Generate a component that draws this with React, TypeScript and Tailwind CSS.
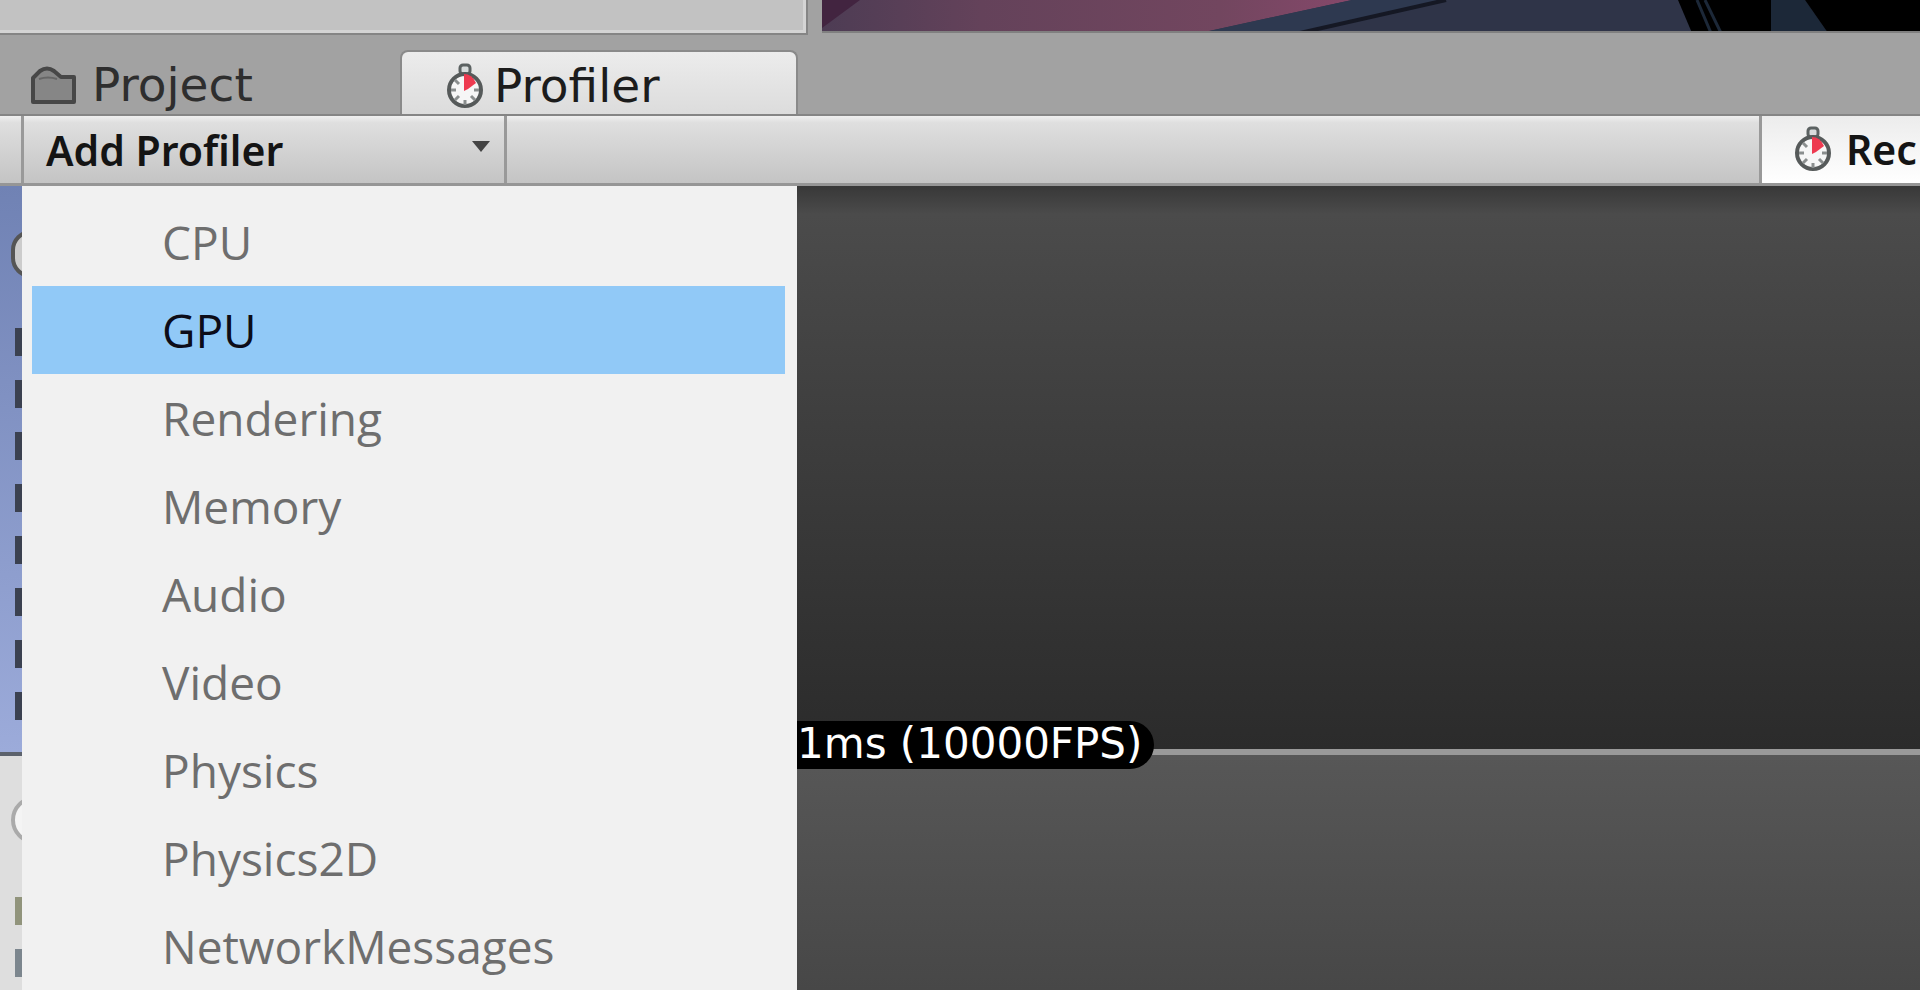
const rows = ['CPU', 'GPU', 'Rendering', 'Memory', 'Audio', 'Video', 'Physics', 'Physics2D', 'NetworkMessages'];

const StopwatchIcon = () => (
  <svg viewBox="0 0 38 46" className="w-[38px] h-[46px] shrink-0" aria-hidden="true">
    <rect x="14" y="2" width="10" height="9" rx="3" fill="#d8dcdc" stroke="#5c6262" strokeWidth="3" />
    <circle cx="19" cy="27" r="16" fill="#f6f6f6" stroke="#565a5a" strokeWidth="4" />
    <path d="M18 28V11q8 0 12 9l-8 6z" fill="#ee3a50" />
    <path
      d="M19 37v5M5 27h5M28 27h5M9 37l4-4M29 37l-4-4M9 17l4 4"
      stroke="#8a8e8e"
      strokeWidth="3"
    />
  </svg>
);

const FolderIcon = () => (
  <svg viewBox="0 0 48 40" className="w-12 h-10 shrink-0" aria-hidden="true">
    <path d="M3 37V13l7-7q7-5 14 0l7 6h13v25z" fill="#868686" stroke="#474747" strokeWidth="4" strokeLinejoin="round" />
    <path d="M9 14q9-3 18 0" fill="none" stroke="#666" strokeWidth="2" />
  </svg>
);

const Scene = () => (
  <svg viewBox="0 0 1098 33" preserveAspectRatio="none" className="h-[33px] flex-1 min-w-0" aria-hidden="true">
    <defs>
      <linearGradient id="dusk">
        <stop offset="0" stopColor="#4d3c54" />
        <stop offset="0.3" stopColor="#64425a" />
        <stop offset="0.75" stopColor="#72465f" />
        <stop offset="1" stopColor="#85486a" />
      </linearGradient>
    </defs>
    <path d="M0 0h1098v33H0z" fill="#2f3448" />
    <path d="M0 0h530L378 33H0z" fill="url(#dusk)" />
    <path d="M0 0h38L0 28z" fill="#422440" />
    <path d="M530 0h90L478 33H378z" fill="#2e3950" />
    <path d="M624 0L478 33" stroke="#151824" strokeWidth="4" />
    <path d="M856 0h93v33h-79z" fill="#000" />
    <path d="M875 0l14 33M883 0l16 33" stroke="#1c2838" strokeWidth="3" />
    <path d="M949 0h34l23 33h-57z" fill="#1c2838" />
    <path d="M983 0h115v33h-92z" fill="#000" />
    <path d="M0 32h1098" stroke="#808080" strokeWidth="2" />
  </svg>
);

const chartNames = ['Rendering', 'Scripts', 'Physics', 'Animation', 'GarbageCollector', 'VSync', 'UI', 'Others'];

const App = () => {
  return (
    <div className="flex flex-col min-h-screen overflow-hidden bg-[#a2a2a2] text-[#1c1c1c] font-['DejaVu_Sans',sans-serif]">
      {/* Panels above the dock */}
      <div className="flex h-[35px] shrink-0">
        <div className="w-[808px] h-[35px] shrink-0 bg-[#c2c2c2] border-b-2 border-r-2 border-[#858585] shadow-[inset_-3px_-3px_0_#d4d4d4]" />
        <div className="flex flex-1 min-w-0 pl-3.5">
          <Scene />
        </div>
      </div>

      {/* Tabs */}
      <div role="tablist" className="flex h-[81px] shrink-0 items-end border-b-2 border-[#858585]">
        <button
          role="tab"
          aria-selected={false}
          className="flex items-center gap-3.5 w-[400px] h-16 pt-1.5 pl-[30px] text-[47px] leading-[58px] text-[#2e2e2e]"
        >
          <FolderIcon />
          Project
        </button>
        <button
          role="tab"
          aria-selected={true}
          className="flex items-center gap-2.5 w-[398px] h-16 pt-1.5 pl-11 rounded-t-lg border-2 border-b-0 border-[#8a8a8a] bg-linear-to-b from-[#ececec] to-[#dcdcdc] text-[47px] leading-[58px]"
        >
          <StopwatchIcon />
          Profiler
        </button>
      </div>

      {/* Toolbar */}
      <div className="flex h-[70px] shrink-0 border-b-3 border-[#969696] bg-linear-to-b from-[#f0f0f0] via-[#dfdfdf] via-10% to-[#c4c4c4] font-['Noto_Sans',sans-serif] font-semibold text-[41px] leading-[64px] text-[#141414]">
        <div className="w-6 shrink-0 border-r-3 border-[#999]" />
        <button
          aria-haspopup="menu"
          aria-expanded={true}
          className="flex items-center justify-between w-[483px] shrink-0 pl-[22px] pr-3.5 border-r-3 border-[#999]"
        >
          Add Profiler
          <svg viewBox="0 0 18 12" className="w-[18px] h-3 mb-1.5" aria-hidden="true">
            <path d="M0 0h18l-9 11z" fill="#444" />
          </svg>
        </button>
        <div className="flex-1" />
        <button className="flex items-center gap-3.5 w-[161px] shrink-0 pb-0.5 pl-8 whitespace-nowrap border-l-3 border-[#999] bg-linear-to-b from-[#ececec] to-white">
          <StopwatchIcon />
          Rec
        </button>
      </div>

      <div className="flex flex-1">
        {/* Chart legend, mostly covered by the menu */}
        <div className="flex flex-col w-[22px] shrink-0 overflow-hidden">
          <div className="h-[570px] shrink-0 pl-[15px] border-b-4 border-[#5c626c] bg-linear-to-b from-[#7082b4] to-[#9cabda]">
            <div className="w-10 h-12 mt-11 -ml-1 rounded-full border-4 border-[#555] bg-[#ccc]" />
            <div className="flex flex-col gap-6 pt-[50px]">
              {chartNames.map((name) => (
                <div key={name} className="h-7 w-7 shrink-0 bg-[#3b4150]" />
              ))}
            </div>
          </div>
          <div className="flex-1 pl-[15px] bg-[#dedede]">
            <div className="w-12 h-12 mt-10 -ml-1 rounded-full border-4 border-[#aaa] bg-[#f4f4f4]" />
            <div className="h-7 w-7 mt-[53px] bg-[#91947c]" />
            <div className="h-7 w-7 mt-6 bg-[#7c868e]" />
          </div>
        </div>

        <ul role="menu" className="w-[775px] shrink-0 pt-3 pl-[10px] pr-3 bg-[#f1f1f1] font-['Open_Sans',sans-serif] text-[46px] text-[#6e6e6e]">
          {rows.map((row) => (
            <li key={row} role="none">
              <button
                role="menuitem"
                className={
                  row === 'GPU'
                    ? 'block w-full h-[88px] pl-[130px] text-left leading-[86px] font-medium bg-[#91c9f7] text-[#0c0c18]'
                    : 'block w-full h-[88px] pl-[130px] text-left leading-[88px]'
                }
              >
                {row}
              </button>
            </li>
          ))}
        </ul>

        {/* Charts */}
        <div className="relative flex flex-col flex-1 min-w-0">
          <div className="h-[569px] shrink-0 border-b-6 border-[#999] bg-linear-to-b from-[#383838] via-[#4b4b4b] via-5% to-[#2b2b2b]" />
          <div className="flex-1 bg-linear-to-b from-[#575757] to-[#474747]" />
          <div className="absolute left-0 top-[535px] h-12 pr-3 rounded-r-full bg-black text-white text-[42px] leading-[46px] whitespace-nowrap">
            1ms (10000FPS)
          </div>
        </div>
      </div>
    </div>
  );
};

export default App;
